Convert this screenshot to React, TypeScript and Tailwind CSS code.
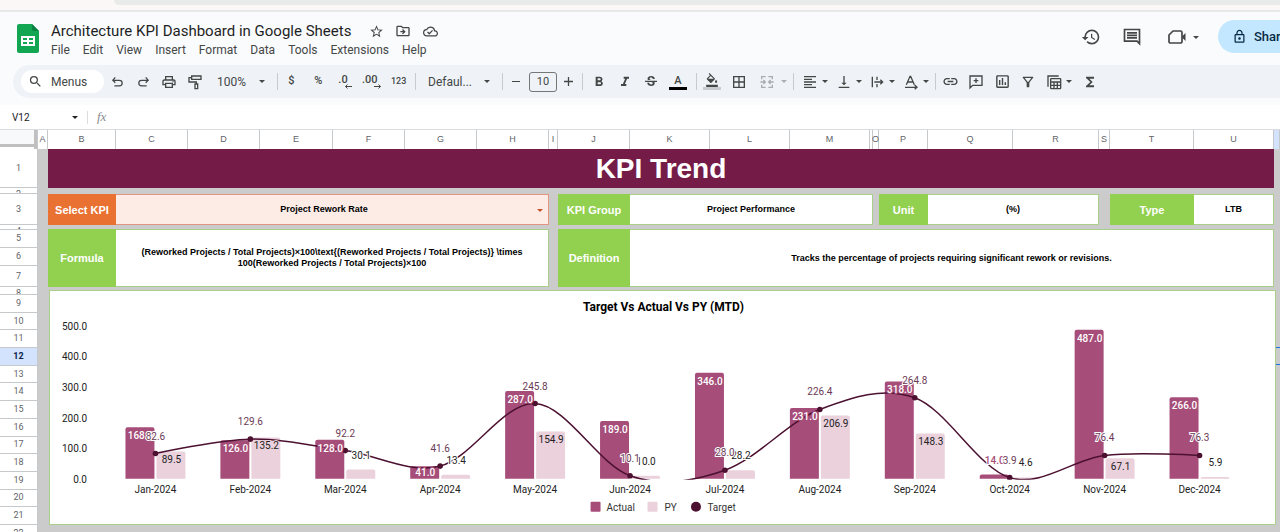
import type { ReactNode } from "react";
import {
  MdBorderAll,
  MdFormatAlignLeft,
  MdFormatBold,
  MdFormatColorFill,
  MdFormatItalic,
  MdFunctions,
  MdHistory,
  MdLink,
  MdOutlineCloudDone,
  MdOutlineDriveFileMove,
  MdOutlineFilterAlt,
  MdOutlineInsertChart,
  MdOutlineLock,
  MdOutlinePrint,
  MdSearch,
  MdStarBorder,
  MdStrikethroughS,
  MdVerticalAlignBottom,
} from "react-icons/md";

// columns A to V
const COLS =
  "grid grid-cols-[10px_minmax(0,68fr)_minmax(0,72fr)_minmax(0,72fr)_minmax(0,73fr)_minmax(0,72fr)_minmax(0,72fr)_minmax(0,72fr)_9px_minmax(0,72fr)_minmax(0,80fr)_minmax(0,80fr)_minmax(0,80fr)_3px_6px_minmax(0,49fr)_minmax(0,85fr)_minmax(0,86fr)_11px_minmax(0,84fr)_minmax(0,80fr)_6px]";

const LETTERS = "ABCDEFGHIJKLMNOPQRSTUV".split("");
const MENUS = ["File", "Edit", "View", "Insert", "Format", "Data", "Tools", "Extensions", "Help"];
const LOWER_ROWS = [9, 10, 11, 12, 13, 14, 15, 16, 17, 18, 19, 20, 21];

const Caret = ({ className = "" }: { className?: string }) => (
  <svg viewBox="0 0 6 3" className={`h-[3px] w-[6px] shrink-0 fill-current ${className}`}>
    <path d="M0 0h6L3 3z" />
  </svg>
);

const Tool = ({ label, className = "w-[26px]", children }: { label: string; className?: string; children: ReactNode }) => (
  <button type="button" aria-label={label} className={`flex h-6 shrink-0 items-center justify-center ${className}`}>
    {children}
  </button>
);

const Divider = () => <div className="h-[17px] w-px shrink-0 bg-[#c7cacf]" />;

const UndoIcon = ({ className = "" }: { className?: string }) => (
  <svg viewBox="0 0 24 24" className={`size-[15px] fill-none stroke-current stroke-2 ${className}`}>
    <path d="M7 19h8a4.500 4.500 0 0 0 0-9H5M8.500 5.500L4.500 10l4 4" />
  </svg>
);

const PaintRollerIcon = () => (
  <svg viewBox="0 0 24 24" className="size-4 fill-none stroke-current stroke-2">
    <path d="M7 3h14v5H7zM7 5.500H3V12h11v3M12 15h4v7h-4z" />
  </svg>
);

const DecimalIcon = ({ text, more = false }: { text: string; more?: boolean }) => (
  <span className="flex flex-col items-end">
    <span className="pr-1 text-[11px] leading-[9px] font-medium">{text}</span>
    <svg viewBox="0 0 8 5" className={`h-[5px] w-2 fill-none stroke-current ${more ? "rotate-180" : ""}`}>
      <path d="M8 2.500H1.500M3.500.5l-2 2 2 2" />
    </svg>
  </span>
);

const MergeIcon = () => (
  <svg viewBox="0 0 24 24" className="size-4 fill-none stroke-current stroke-2">
    <path d="M10 4H4v4M14 4h6v4M10 20H4v-4M14 20h6v-4M2 12h7M6.500 9l3 3-3 3M22 12h-7M17.500 9l-3 3 3 3" />
  </svg>
);

const WrapIcon = () => (
  <svg viewBox="0 0 24 24" className="size-4 fill-none stroke-current stroke-2">
    <path d="M5 4v16M12 4v5M12 15v5M8 12h12M17 8.500l3.500 3.500-3.500 3.500" />
  </svg>
);

const RotateTextIcon = () => (
  <svg viewBox="0 0 24 24" className="size-4 fill-none stroke-current stroke-2">
    <path d="M5 16L10.500 3.500h1L17 16M7 12h8M3 20h17M17.500 16.500L21 20l-3.500 3" />
  </svg>
);

const TableViewIcon = () => (
  <svg viewBox="0 0 24 24" className="size-4 fill-none stroke-current stroke-2">
    <path d="M3 19V3h16" />
    <rect x="7" y="7" width="15" height="15" rx="1" />
    <path d="M7 12h15M7 17h15M12 12v10M17 12v10" />
  </svg>
);

const AddCommentIcon = () => (
  <svg viewBox="0 0 24 24" className="size-4 fill-none stroke-current stroke-2">
    <path d="M3 21V3h18v14H7zM12 6.500v7M8.500 10h7" />
  </svg>
);

const CommentIcon = () => (
  <svg viewBox="0 0 24 24" className="size-5 fill-none stroke-current stroke-2">
    <path d="M21 20V3H3v14h15zM6 7h12M6 10h12M6 13h12" />
  </svg>
);

const VideoIcon = () => (
  <svg viewBox="0 0 20 16" className="h-4 w-5 stroke-current stroke-[1.7]">
    <path className="fill-none" d="M6 2h7.500a1.500 1.500 0 0 1 1.500 1.500v9a1.500 1.500 0 0 1-1.500 1.500h-10A1.500 1.500 0 0 1 2 12.500V6z" />
    <path className="fill-current stroke-none" d="M15 7.500L18.500 4v8L15 8.500z" />
  </svg>
);

const Header = () => (
  <header className="flex h-[53px] shrink-0 text-[#444746]">
    <svg viewBox="0 0 22 29" className="mt-3 ml-[17px] h-[29px] w-[22px] shrink-0">
      <path fill="#12a653" d="M2 0h13l7 7v20a2 2 0 0 1-2 2H2a2 2 0 0 1-2-2V2a2 2 0 0 1 2-2z" />
      <path fill="#0b8043" d="M15 0l7 7h-5a2 2 0 0 1-2-2z" />
      <path fill="#fff" fillRule="evenodd" d="M4 12h14v10H4zM6 14v2h4v-2zM12 14v2h4v-2zM6 18v2h4v-2zM12 18v2h4v-2z" />
    </svg>
    <div className="ml-3 pt-[7px]">
      <div className="flex items-center">
        <h1 className="text-[15px] leading-5 whitespace-nowrap text-[#1f1f1f]">Architecture KPI Dashboard in Google Sheets</h1>
        <div className="ml-3 flex">
          <Tool label="Star">
            <MdStarBorder size={15} />
          </Tool>
          <Tool label="Move" className="w-7">
            <MdOutlineDriveFileMove size={16} />
          </Tool>
          <Tool label="Document status">
            <MdOutlineCloudDone size={15} />
          </Tool>
        </div>
      </div>
      <nav className="-mt-px flex gap-[13px] text-xs">
        {MENUS.map((m) => (
          <button type="button" key={m}>
            {m}
          </button>
        ))}
      </nav>
    </div>
    <div className="ml-auto flex items-start pt-2">
      <button type="button" aria-label="Version history" className="flex h-[34px] w-10 items-center justify-center">
        <MdHistory size={20} />
      </button>
      <button type="button" aria-label="Comments" className="flex h-[34px] w-[42px] items-center justify-center">
        <CommentIcon />
      </button>
      <button type="button" aria-label="Join a call" className="mr-[19px] ml-[14px] flex h-[34px] items-center gap-[6px]">
        <VideoIcon />
        <Caret />
      </button>
      <button type="button" className="flex h-[33px] w-[62px] items-center gap-[7px] overflow-hidden rounded-l-full bg-[#c2e7ff] pl-[14px] text-[13px] font-medium text-[#0b2b45]">
        <MdOutlineLock size={15} className="shrink-0" />
        Share
      </button>
    </div>
  </header>
);

const Toolbar = () => (
  <div className="ml-[13px] flex h-[33px] shrink-0 items-center overflow-hidden rounded-l-full bg-[#eff3f8] pl-2 text-[#444746]">
    <button type="button" className="flex h-[23px] w-[83px] shrink-0 items-center gap-2 rounded-full bg-white pl-[7px] text-xs">
      <MdSearch size={15} />
      Menus
    </button>
    <Tool label="Undo">
      <UndoIcon />
    </Tool>
    <Tool label="Redo">
      <UndoIcon className="-scale-x-100" />
    </Tool>
    <Tool label="Print">
      <MdOutlinePrint size={16} />
    </Tool>
    <Tool label="Paint format">
      <PaintRollerIcon />
    </Tool>
    <label className="flex w-[69px] shrink-0 items-center pl-[9px]">
      <select aria-label="Zoom" className="w-[42px] appearance-none text-xs">
        <option>100%</option>
      </select>
      <Caret />
    </label>
    <Divider />
    <div className="mr-[3px] grid w-[134px] shrink-0 grid-cols-5">
      <Tool label="Currency" className="text-[11px] font-medium">
        $
      </Tool>
      <Tool label="Percent" className="text-[11px] font-medium">
        %
      </Tool>
      <Tool label="Decrease decimals" className="">
        <DecimalIcon text=".0" />
      </Tool>
      <Tool label="Increase decimals" className="">
        <DecimalIcon text=".00" more />
      </Tool>
      <Tool label="More formats" className="text-[9px] font-medium">
        123
      </Tool>
    </div>
    <Divider />
    <label className="flex w-[86px] shrink-0 items-center pl-3">
      <select aria-label="Font" className="w-14 appearance-none text-xs">
        <option>Defaul...</option>
      </select>
      <Caret />
    </label>
    <Divider />
    <Tool label="Decrease font size">
      <span className="h-px w-2 bg-current" />
    </Tool>
    <input aria-label="Font size" defaultValue="10" className="h-5 w-7 shrink-0 rounded-[3px] border border-[#747775] text-center text-[11px]" />
    <Tool label="Increase font size" className="w-[25px] pr-[2px]">
      <svg viewBox="0 0 9 9" className="size-[9px] stroke-current stroke-[1.3]">
        <path d="M4.500 0v9M0 4.500h9" />
      </svg>
    </Tool>
    <Divider />
    <div className="flex w-[113px] shrink-0 pl-[3px]">
      <Tool label="Bold">
        <MdFormatBold size={16} />
      </Tool>
      <Tool label="Italic">
        <MdFormatItalic size={16} />
      </Tool>
      <Tool label="Strikethrough">
        <MdStrikethroughS size={16} />
      </Tool>
      <Tool label="Text color" className="w-7">
        <span className="w-[18px] border-b-[3px] border-black text-[11px] leading-[13px] font-medium">A</span>
      </Tool>
    </div>
    <Divider />
    <div className="flex w-[96px] shrink-0 items-center pl-px">
      <Tool label="Fill color" className="w-[27px]">
        <span className="flex w-[18px] justify-center border-b-[3px] border-[#c9cccf]">
          <MdFormatColorFill size={14} />
        </span>
      </Tool>
      <Tool label="Borders" className="w-7">
        <MdBorderAll size={16} />
      </Tool>
      <Tool label="Merge cells" className="w-[39px] gap-[6px] text-[#a9acb0]">
        <MergeIcon />
        <Caret />
      </Tool>
    </div>
    <Divider />
    <div className="flex w-[141px] shrink-0 pl-[4px]">
      <Tool label="Horizontal align" className="w-[34px] gap-1">
        <MdFormatAlignLeft size={16} />
        <Caret />
      </Tool>
      <Tool label="Vertical align" className="w-[33px] gap-1">
        <MdVerticalAlignBottom size={16} />
        <Caret />
      </Tool>
      <Tool label="Text wrapping" className="w-[34px] gap-1">
        <WrapIcon />
        <Caret />
      </Tool>
      <Tool label="Text rotation" className="w-[34px] gap-1">
        <RotateTextIcon />
        <Caret />
      </Tool>
    </div>
    <Divider />
    <div className="flex pl-px">
      <Tool label="Insert link">
        <MdLink size={17} />
      </Tool>
      <Tool label="Insert comment">
        <AddCommentIcon />
      </Tool>
      <Tool label="Insert chart">
        <MdOutlineInsertChart size={17} />
      </Tool>
      <Tool label="Create a filter">
        <MdOutlineFilterAlt size={16} />
      </Tool>
      <Tool label="Filter views" className="w-9 gap-1">
        <TableViewIcon />
        <Caret />
      </Tool>
      <Tool label="Functions">
        <MdFunctions size={16} />
      </Tool>
    </div>
  </div>
);

const FormulaBar = () => (
  <div className="mt-[7px] flex h-[25px] shrink-0 items-center border-b border-[#dadce0] bg-white text-[#202124]">
    <input aria-label="Name box" defaultValue="V12" className="ml-3 w-[60px] text-[10px]" />
    <Caret />
    <div className="mx-[9px] h-[13px] w-px bg-[#dadce0]" />
    <span className="font-['Liberation_Serif',serif] text-[13px] text-[#8a8d91] italic">fx</span>
    <input aria-label="Formula" className="min-w-0 flex-1" />
  </div>
);

const RowHead = ({ className = "items-center", children }: { className?: string; children: ReactNode }) => (
  <div className={`flex shrink-0 justify-center overflow-hidden border-b border-[#c6c9cc] ${className}`}>{children}</div>
);

const RowHeaders = () => (
  <div className="flex w-[38px] shrink-0 flex-col overflow-hidden border-r border-[#c6c9cc] bg-white text-[9px] leading-[9px] text-[#5f6368]">
    <div className="h-[19px] shrink-0 border-r-[3px] border-[#c0c0c0]">
      <div className="h-[17px] border-b-[3px] border-[#c0c0c0] bg-[#f8f9fa]" />
    </div>
    <RowHead className="h-[39px] items-center">1</RowHead>
    <RowHead className="h-[6px] items-start pt-[2px]">2</RowHead>
    <RowHead className="h-[31px] items-center">3</RowHead>
    <RowHead className="h-[5px] items-start pt-[2px]">4</RowHead>
    <RowHead className="h-[18px] items-center">5</RowHead>
    <RowHead className="h-[18px] items-center">6</RowHead>
    <RowHead className="h-[21px] items-center">7</RowHead>
    <RowHead className="h-[8px] items-start pt-[2px]">8</RowHead>
    <div className="grid h-[230px] shrink-0 auto-rows-fr">
      {LOWER_ROWS.map((n) => (
        <RowHead key={n} className={n === 12 ? "items-center bg-[#d3e3fd] font-bold text-[#0b1f4a]" : "items-center"}>
          {n}
        </RowHead>
      ))}
    </div>
    <RowHead className="h-[18px] items-center">22</RowHead>
  </div>
);

const Label = ({ className, children }: { className: string; children: ReactNode }) => (
  <div className={`flex items-center justify-center pt-px text-[11px] font-bold text-white ${className}`}>{children}</div>
);

const Value = ({ className, children }: { className: string; children: ReactNode }) => (
  <div className={`flex items-center justify-center border border-l-0 border-[#a9cf8b] bg-white text-center text-[9px] leading-[11px] font-bold text-black ${className}`}>
    {children}
  </div>
);

const DATA = [
  { month: "Jan-2024", actual: 168, py: 89.5, target: 82.6 },
  { month: "Feb-2024", actual: 126, py: 135.2, target: 129.6 },
  { month: "Mar-2024", actual: 128, py: 30.1, target: 92.2 },
  { month: "Apr-2024", actual: 41, py: 13.4, target: 41.6 },
  { month: "May-2024", actual: 287, py: 154.9, target: 245.8 },
  { month: "Jun-2024", actual: 189, py: 10, target: 10.1 },
  { month: "Jul-2024", actual: 346, py: 28.2, target: 28 },
  { month: "Aug-2024", actual: 231, py: 206.9, target: 226.4 },
  { month: "Sep-2024", actual: 318, py: 148.3, target: 264.8 },
  { month: "Oct-2024", actual: 14, py: 4.6, target: 3.9 },
  { month: "Nov-2024", actual: 487, py: 67.1, target: 76.4 },
  { month: "Dec-2024", actual: 266, py: 5.9, target: 76.3 },
];

const BASE = 188;
const cx = (i: number) => 104.5 + i * 95;
const cy = (v: number) => BASE - v * 0.3066;

const bar = (x: number, v: number) => {
  const h = BASE - cy(v);
  const r = Math.min(2, h);
  return `M${x} ${BASE}v${r - h}q0 ${-r} ${r} ${-r}h${29 - 2 * r}q${r} 0 ${r} ${r}v${h - r}z`;
};

// smooth line through the target points
const curve = () => {
  const pts = DATA.map((d, i) => [cx(i), cy(d.target)]);
  let path = `M${pts[0][0]} ${pts[0][1]}`;
  for (let i = 0; i < pts.length - 1; i++) {
    const [a, b] = [pts[i], pts[i + 1]];
    const prev = pts[i - 1];
    const next = pts[i + 2];
    const c1 = prev ? [a[0] + (b[0] - prev[0]) / 6, a[1] + (b[1] - prev[1]) / 6] : a;
    const c2 = next ? [b[0] - (next[0] - a[0]) / 6, b[1] - (next[1] - a[1]) / 6] : b;
    path += `C${c1[0]} ${c1[1]} ${c2[0]} ${c2[1]} ${b[0]} ${b[1]}`;
  }
  return path;
};

const HALO = { paintOrder: "stroke" as const };

const TrendChart = () => (
  <svg viewBox="0 0 1225 233" role="img" aria-label="Target Vs Actual Vs PY (MTD)" className="block h-auto w-full font-[Roboto,sans-serif] text-[10px]" textAnchor="middle">
    <clipPath id="plot">
      <rect width="1225" height={BASE + 1} />
    </clipPath>
    <text x="613" y="20" className="fill-black text-xs font-bold">
      Target Vs Actual Vs PY (MTD)
    </text>
    {[0, 100, 200, 300, 400, 500].map((v) => (
      <text key={v} x="36" y={cy(v) + 4} textAnchor="end" fill="#222">
        {v.toFixed(1)}
      </text>
    ))}
    {DATA.map((d, i) => (
      <g key={d.month}>
        <path d={bar(cx(i) - 30, d.actual)} fill="#a64d79" />
        <path d={bar(cx(i) + 1, d.py)} fill="#ead1dc" />
        <text x={cx(i)} y="202" fill="#222">
          {d.month}
        </text>
      </g>
    ))}
    <g clipPath="url(#plot)">
      <path d={curve()} fill="none" stroke="#4c1130" strokeWidth="1.5" />
      {DATA.map((d, i) => (
        <circle key={d.month} cx={cx(i)} cy={cy(d.target)} r="2.8" fill="#4c1130" />
      ))}
    </g>
    {DATA.map((d, i) => (
      <text
        key={d.month}
        x={cx(i) - 15}
        y={d.actual > 30 ? Math.min(cy(d.actual) + 12, BASE - 3) : cy(d.actual) - 11}
        fill={d.actual > 30 ? "#fff" : "#a64d79"}
        stroke={d.actual > 30 ? "#a64d79" : "#fff"}
        strokeWidth="2"
        className="font-medium"
        style={HALO}
      >
        {d.actual.toFixed(1)}
      </text>
    ))}
    {DATA.map((d, i) => (
      <text key={d.month} x={cx(i) + 16} y={d.py > 60 ? cy(d.py) + 12 : cy(d.py) - 11} fill="#222" stroke={d.py > 60 ? "#ead1dc" : "#fff"} strokeWidth="2" style={HALO}>
        {d.py.toFixed(1)}
      </text>
    ))}
    {DATA.map((d, i) => (
      <text key={d.month} x={cx(i)} y={cy(d.target) - 14} fill="#6a3a54" stroke="#fff" strokeWidth="2" style={HALO}>
        {d.target.toFixed(1)}
      </text>
    ))}
    <g textAnchor="start" fill="#333">
      <rect x="540" y="211" width="10" height="10" rx="1" fill="#a64d79" />
      <text x="556" y="220">
        Actual
      </text>
      <rect x="597" y="211" width="10" height="10" rx="1" fill="#ead1dc" />
      <text x="614" y="220">
        PY
      </text>
      <circle cx="645.500" cy="216" r="5" fill="#4c1130" />
      <text x="657" y="220">
        Target
      </text>
    </g>
  </svg>
);

const Sheet = () => (
  <div className="flex min-w-0 flex-1 flex-col bg-[#cbcbcb] font-['Liberation_Sans',Arial,sans-serif]">
    <div className={`${COLS} h-[19px] shrink-0 bg-white text-[9px] text-[#5f6368]`}>
      {LETTERS.map((l) => (
        <div key={l} className={`flex items-center justify-center border-r border-[#c6c9cc] ${l === "V" ? "bg-[#d3e3fd]" : ""}`}>
          {l === "N" || l === "V" ? "" : l}
        </div>
      ))}
    </div>
    <div className={`${COLS} h-[39px] shrink-0`}>
      <h2 className="col-start-2 col-end-22 flex items-center justify-center bg-[#741b47] text-[28px] leading-[39px] font-bold text-white">KPI Trend</h2>
    </div>
    <div className={`${COLS} mt-[6px] h-[31px] shrink-0`}>
      <Label className="col-start-2 bg-[#e97132]">
        <label htmlFor="kpi">Select KPI</label>
      </Label>
      <div className="relative col-start-3 col-end-9 flex border border-l-0 border-[#e29583] bg-[#fdece6]">
        <select id="kpi" className="w-full appearance-none pr-4 text-center text-[9px] font-bold text-black [text-align-last:center]">
          <option>Project Rework Rate</option>
        </select>
        <Caret className="pointer-events-none absolute top-[14px] right-[5px] text-[#c8562a]" />
      </div>
      <Label className="col-start-10 bg-[#92d050]">KPI Group</Label>
      <Value className="col-start-11 col-end-15">Project Performance</Value>
      <Label className="col-start-16 bg-[#92d050]">Unit</Label>
      <Value className="col-start-17 col-end-19">(%)</Value>
      <Label className="col-start-20 bg-[#92d050]">Type</Label>
      <Value className="col-start-21">LTB</Value>
    </div>
    <div className={`${COLS} mt-1 h-[58px] shrink-0`}>
      <Label className="col-start-2 bg-[#92d050]">Formula</Label>
      <Value className="col-start-3 col-end-9">
        {"(Reworked Projects / Total Projects)×100\\text{(Reworked Projects / Total Projects)} \\times"}
        <br />
        100(Reworked Projects / Total Projects)×100
      </Value>
      <Label className="col-start-10 bg-[#92d050]">Definition</Label>
      <Value className="col-start-11 col-end-22">Tracks the percentage of projects requiring significant rework or revisions.</Value>
    </div>
    <div className="mt-[3px] flex items-start pl-[11px]">
      <div className="min-w-0 flex-1 border border-[#a9cf8b] bg-white pl-px">
        <TrendChart />
      </div>
      {/* selected cell V12 */}
      <div className="mt-[57px] h-[18px] w-1 border-y border-[#1a73e8]" />
    </div>
  </div>
);

export default function App() {
  return (
    <div className="flex h-screen flex-col overflow-hidden bg-[#f9fbfd] font-[Roboto,sans-serif]">
      <div className="h-3 shrink-0 border-b-2 border-[#e6e8ea] bg-[#fbf7f6]">
        <div className="ml-[114px] h-[5px] rounded-bl-full bg-[#e8ebea]" />
      </div>
      <Header />
      <Toolbar />
      <FormulaBar />
      <main className="flex min-h-0 flex-1 overflow-hidden">
        <RowHeaders />
        <Sheet />
      </main>
    </div>
  );
}
